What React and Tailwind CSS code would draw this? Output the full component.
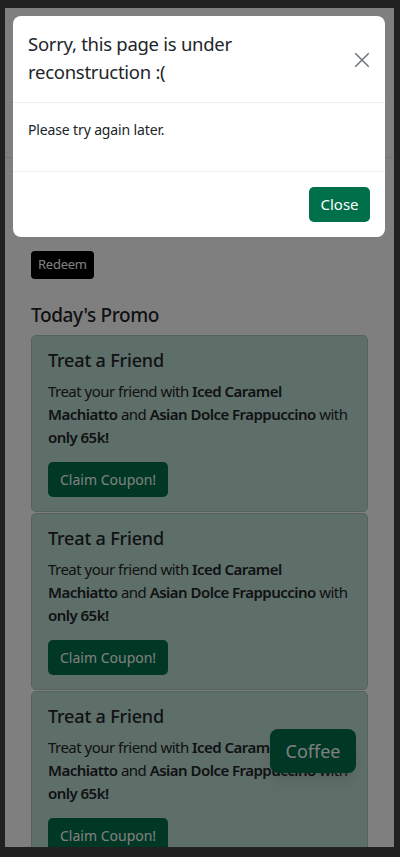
import React from "react";

const PromoCard = () => (
    <div className="mb-px rounded-[5px] border border-[#aac7bc] bg-[#bddcd1] px-4 pt-[12px] pb-[14px] text-[#212529]">
        <h3 className="text-[18px] leading-[24px] font-medium tracking-[-0.01em]">Treat a Friend</h3>
        <p className="mt-[8px] text-[15px] leading-[23px] tracking-[-0.035em]">
            Treat your friend with <b className="font-semibold">Iced Caramel Machiatto</b> and{" "}
            <b className="font-semibold">Asian Dolce Frappuccino</b> with <b className="font-semibold">only 65k!</b>
        </p>
        <button className="mt-[13px] h-[35px] rounded-[5px] bg-[#00704a] px-3 text-[14px] text-white">
            Claim Coupon!
        </button>
    </div>
);

const App = () => {
    return (
        <main className="min-h-screen bg-[#212121] pt-2 pb-[10px] pl-[5px] pr-[6px] font-['Noto_Sans',sans-serif]">
            <div className="relative h-[839px] overflow-hidden bg-white">
                <div className="h-[150px] border-b border-[#e8e8e8]" />
                <div className="px-[26px] pt-[93px]">
                    <button className="h-[28px] rounded-[4px] bg-black px-[7px] text-[13px] tracking-[-0.02em] text-white">Redeem</button>
                    <h2 className="mt-[22px] mb-[6px] text-[19px] leading-[28px] font-medium tracking-[-0.02em] text-[#212529]">Today's Promo</h2>
                    <PromoCard />
                    <PromoCard />
                    <PromoCard />
                </div>

                <button className="absolute right-[38px] bottom-[74px] h-[44px] w-[86px] rounded-[8px] bg-[#00704a] text-[18px] text-white shadow-lg">
                    Coffee
                </button>

                <div className="absolute inset-0 bg-black/50" />

                <section className="absolute top-2 left-2 right-[9px] rounded-lg bg-white text-[#212529]">
                    <header className="flex items-center justify-between border-b border-[#eeeeee] pl-[15px] pr-[10px] pt-[14px] pb-[16px]">
                        <h1 className="text-[18.5px] leading-[28px] tracking-[-0.015em]">Sorry, this page is under reconstruction :(</h1>
                        <button className="ml-6 mt-1 shrink-0 p-1 text-[#6c757d]">
                            <svg width="18" height="18" viewBox="0 0 16 16" fill="none" stroke="currentColor" strokeWidth="1.3">
                                <path d="M2 2l12 12M14 2L2 14" />
                            </svg>
                        </button>
                    </header>
                    <div className="border-b border-[#eeeeee] px-[15px] pt-[16px] pb-[30px] text-[14px] leading-[22px] tracking-[-0.01em]">
                        Please try again later.
                    </div>
                    <footer className="flex justify-end px-[15px] pt-[15px] pb-[15px]">
                        <button className="h-[35px] w-[61px] rounded-[5px] bg-[#00704a] text-[15px] text-white">Close</button>
                    </footer>
                </section>
            </div>
        </main>
    );
};

export default App;
